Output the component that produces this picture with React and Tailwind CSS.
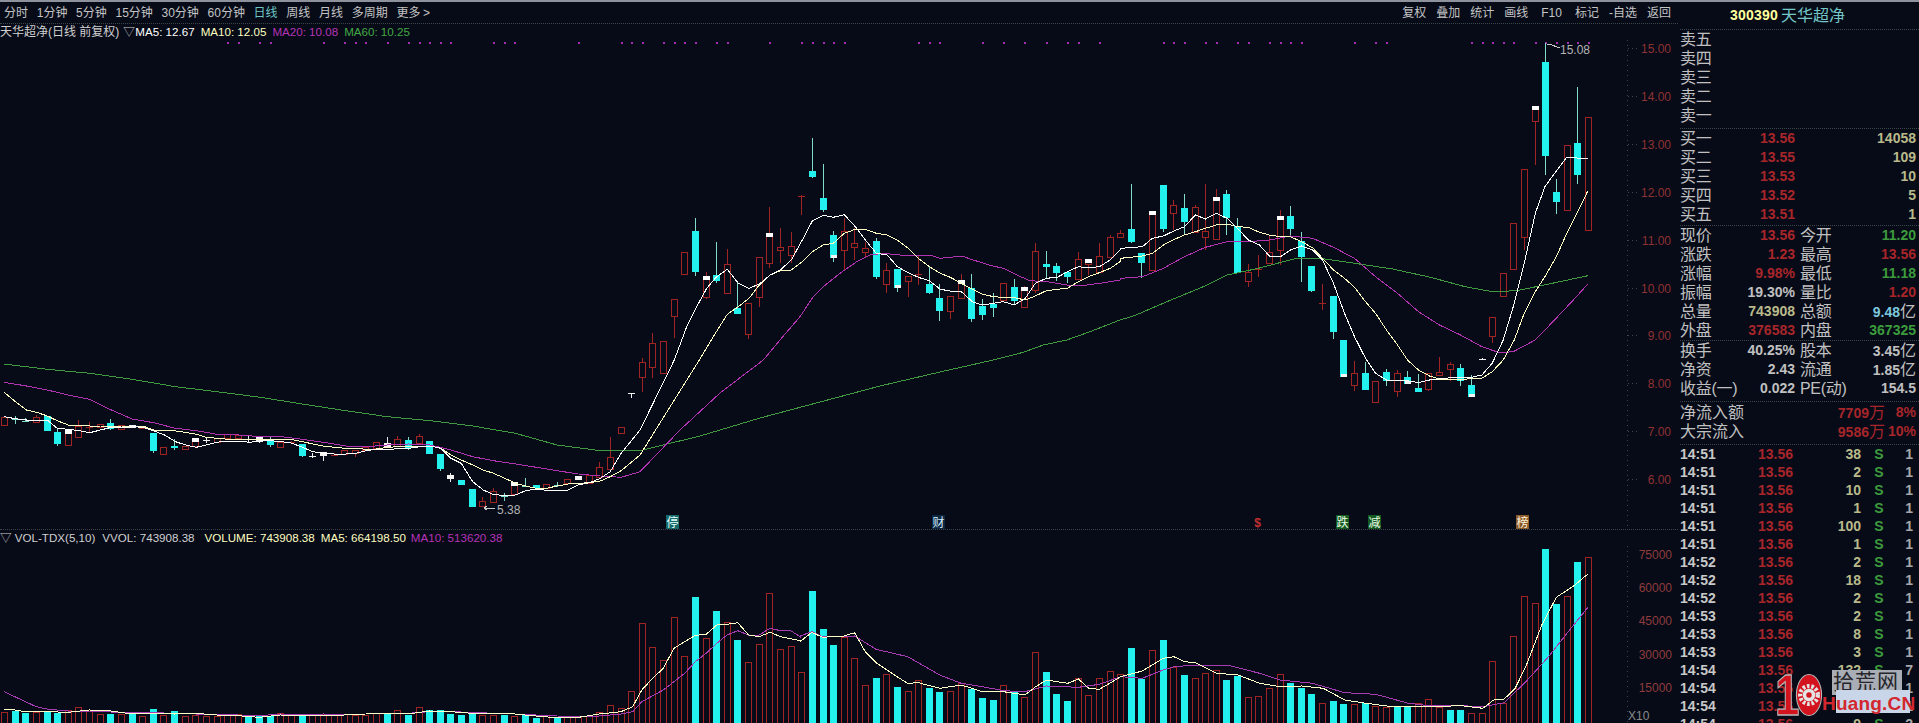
const RED = "#a02424";
const CYAN = "#22f1ee";
const PALE = "#7edcc8";

// [kind, wickTop, bodyTop, bodyBottom, wickBottom], measured on the crops, converted by offset below
// u up, t up + white cap, d down, b down + white foot, x red cross, c cyan cross, k white cross, w white
const lowRows = [
  ["u",230,230,255,255],["c",228,235,238,252],["c",235,239,242,247],["u",225,230,245,245],["d",228,228,272,274],
  ["d",265,276,312,317],["t",272,272,314,314],["u",240,258,290,290],["x",245,258,263,275],["u",253,253,260,260],
  ["d",238,250,266,270],["u",255,255,268,271],["w",254,254,264,264],["u",257,257,265,265],["d",278,278,332,340],
  ["u",322,322,342,342],["d",298,318,325,330],["u",318,318,328,328],["t",296,296,318,318],["k",294,299,301,308],
  ["u",295,295,305,305],["u",283,283,295,295],["u",284,284,294,294],["k",288,295,297,305],["w",288,292,306,310],
  ["d",292,298,314,322],["u",306,306,320,320],["x",302,302,310,312],["d",312,312,348,352],["k",338,345,347,354],
  ["w",337,337,348,362],["x",340,341,344,344],["u",330,330,343,343],["u",330,330,340,352],["u",322,322,330,330],
  ["u",306,306,325,325],["w",292,310,320,325],["u",288,298,318,318],["d",292,300,325,330],["u",282,288,308,308],
  ["d",303,303,342,342],["d",342,342,388,392],["w",398,405,416,425],["d",420,420,434,434],["d",447,447,500,500],
  ["u",472,484,497,497],["u",445,452,485,485],["c",458,465,467,482],["t",430,430,463,463],["c",415,434,437,442],
  ["d",436,436,445,448],["u",432,432,443,443],["c",426,432,434,440],["u",417,417,428,428],["w",408,408,420,420],
  ["u",405,405,428,428],["u",365,382,410,410],["u",292,352,388,388],["u",260,260,278,278],["k",158,158,160,173],
];
const midRows = [
  ["u",714,726,772,816],["u",640,669,740,774],["u",662,662,760,760],["u",538,538,587,653],["u",397,397,463,463],
  ["d",295,333,455,467],["t",457,470,530,538],["d",366,465,483,490],["u",388,433,518,518],["d",490,563,581,581],
  ["u",550,550,643,658],["u",412,412,530,562],["t",262,343,428,445],["u",323,381,391,430],["u",335,379,404,430],
  ["x",224,224,228,285],["d",55,153,171,174],["d",132,235,271,277],["b",333,345,413,425],["u",295,333,391,453],
  ["u",325,370,382,420],["u",365,385,395,410],["d",355,363,470,478],["u",430,451,491,518],["b",447,447,505,515],
  ["u",469,469,482,530],["x",405,460,464,495],["d",438,492,518,522],["d",492,534,572,602],["u",527,527,572,597],
  ["t",462,484,533,533],["d",462,503,597,605],["d",537,557,584,600],["d",520,551,563,590],["u",489,489,540,540],
  ["d",477,501,543,555],["t",498,505,560,560],["u",368,393,510,520],["d",393,433,440,478],["d",430,438,459,482],
  ["d",456,456,472,490],["u",396,418,478,478],["t",421,421,432,465],["u",370,409,455,455],["u",345,352,410,410],["u",330,338,352,352],
];
const highRows = [
  ["d",42,178,215,220],["d",250,250,278,325],["t",125,125,300,300],["d",45,45,177,185],["u",90,105,128,180],
  ["d",72,113,155,195],["u",105,112,185,185],["u",42,183,200,240],["t",58,85,208,208],["d",60,72,143,195],
  ["d",145,168,308,310],["u",282,305,332,352],["x",255,293,297,322],["u",195,245,280,280],["t",120,140,240,285],
  ["d",108,138,177,200],["d",185,212,260,335],["d",288,288,362,367],["x",342,396,400,420],["d",378,378,485,508],
  ["b",510,510,620,620],["u",572,610,645,662],["d",576,610,660,660],["u",632,632,695,695],["d",597,605,632,648],
  ["u",600,608,662,680],["b",603,622,642,642],["d",612,655,665,665],["u",608,608,657,662],["u",560,607,614,615],
  ["u",575,582,596,632],["d",582,594,632,648],["b",615,645,680,680],["k",564,564,566,566],["u",440,440,497,520],
  ["u",310,310,377,377],["u",158,158,298,298],["u",-3,-3,201,240],["t",-189,-189,-147,-15],["d",-381,-324,-42,15],
  ["d",27,66,96,132],["u",-75,-75,120,120],["d",-249,-81,15,42],["u",-159,-159,180,180],
];
const shiftRows = (rows, top) =>
  rows.map(([kind, ...ys]) => [kind, ...ys.map((y) => Math.round(top + y / 3))]);
const candles = [...shiftRows(lowRows, 340), ...shiftRows(midRows, 120), ...shiftRows(highRows, 170)];
const barX = (i) => 4 + 10.63 * i;

const scale = (sx, left, top) => (pts) => pts.map(([x, y]) => [left + x / sx, top + y / 3]);
const fromLow = scale(2.45, 0, 340);
const fromMid = scale(3, 600, 120);
const fromHigh = scale(2.904, 1100, 170);

const ma5 = [
  ...fromLow([[10,230],[38,236],[65,240],[116,240],[140,265],[167,268],[194,272],[220,278],[246,270],[273,262],[298,264],[324,260],[350,262],[376,272],[403,285],[430,305],[455,315],[481,322],[505,315],[532,307],[558,303],[585,303],[611,307],[638,303],[663,302],[689,305],[712,308],[741,322],[767,335],[792,340],[819,342],[847,342],[871,340],[897,332],[922,328],[949,330],[976,325],[1001,325],[1028,320],[1054,318],[1080,325],[1105,355],[1130,370],[1158,425],[1184,450],[1209,464],[1237,466],[1263,465],[1288,452],[1314,447],[1339,451],[1365,451],[1392,450],[1417,435],[1444,428],[1471,415],[1495,395],[1522,340],[1568,270]]),
  ...fromMid([[223,720],[260,620],[290,560],[320,505],[350,470],[382,448],[415,490],[447,505],[478,492],[511,465],[541,450],[574,420],[607,360],[637,303],[670,286],[700,292],[733,284],[766,320],[796,360],[829,400],[862,405],[892,440],[925,458],[955,472],[988,482],[1021,508],[1051,513],[1084,515],[1117,545],[1147,555],[1180,550],[1210,545],[1243,555],[1276,535],[1306,490],[1339,475],[1372,472],[1402,455],[1435,440],[1465,443],[1498,440],[1531,420],[1560,390]]),
  ...fromHigh([[60,235],[123,230],[152,205],[184,198],[216,182],[245,170],[277,135],[306,147],[338,130],[370,145],[399,175],[431,210],[463,225],[492,258],[524,260],[553,240],[585,228],[617,240],[646,270],[678,340],[710,430],[739,500],[771,565],[800,610],[832,630],[864,630],[893,632],[925,638],[957,630],[986,627],[1018,623],[1047,623],[1079,622],[1109,615],[1139,580],[1171,510],[1203,400],[1232,280],[1264,130],[1292,50],[1320,10]]),
  [1555,173],[1567,157],[1577,158],[1588,159],
];
const ma10 = [
  ...fromLow([[10,157],[38,185],[65,210],[90,217],[116,228],[140,242],[167,255],[194,257],[220,258],[246,258],[273,260],[298,258],[324,258],[350,258],[376,270],[403,272],[430,273],[455,277],[481,283],[505,292],[532,295],[558,298],[585,299],[611,300],[638,298],[663,298],[689,298],[712,298],[741,305],[767,312],[792,318],[819,322],[847,325],[871,325],[897,328],[922,327],[949,322],[976,320],[1001,320],[1028,318],[1054,318],[1080,325],[1105,345],[1130,360],[1158,375],[1184,390],[1209,400],[1237,415],[1263,430],[1288,438],[1314,445],[1339,445],[1365,438],[1392,432],[1417,430],[1444,428],[1471,423],[1495,410],[1522,392],[1568,345]]),
  ...fromMid([[298,720],[340,650],[382,583],[415,560],[447,535],[478,495],[511,465],[541,452],[574,450],[607,425],[637,395],[670,375],[700,370],[733,340],[766,328],[796,328],[829,340],[862,345],[892,360],[925,385],[955,415],[988,440],[1021,460],[1051,472],[1084,490],[1117,508],[1147,522],[1180,530],[1210,532],[1243,533],[1276,540],[1306,528],[1339,512],[1372,508],[1402,505],[1435,485],[1465,470],[1498,458],[1531,445],[1560,425]]),
  ...fromHigh([[60,265],[123,258],[152,250],[184,225],[216,208],[245,195],[277,185],[306,175],[338,165],[370,162],[399,170],[431,172],[463,187],[492,195],[524,200],[553,200],[585,215],[617,233],[646,265],[678,300],[710,325],[739,352],[771,395],[800,430],[832,480],[864,525],[893,570],[925,600],[957,618],[986,627],[1018,627],[1047,630],[1079,625],[1109,625],[1139,605],[1171,570],[1203,510],[1232,430],[1264,365],[1292,320],[1325,260],[1360,180],[1390,120],[1417,62]]),
];
const ma20 = [
  ...fromLow([[10,127],[65,138],[116,150],[167,165],[220,178],[273,210],[324,237],[376,248],[430,265],[481,272],[532,283],[585,285],[638,290],[689,290],[741,298],[792,307],[847,318],[897,320],[949,315],[1001,312],[1054,315],[1105,330],[1158,350],[1209,362],[1263,372],[1314,382],[1365,392],[1417,402],[1471,408],[1522,412],[1568,395]]),
  [680,430],[720,393],
  ...fromMid([[490,720],[540,660],[600,590],[640,530],[670,500],[720,460],[770,425],[810,405],[850,400],[900,405],[950,405],[990,405],[1020,415],[1050,412],[1085,408],[1120,420],[1170,436],[1210,445],[1250,465],[1290,482],[1340,485],[1400,495],[1460,495],[1500,490],[1560,480]]),
  ...fromHigh([[60,325],[123,320],[184,295],[245,260],[306,232],[370,215],[431,215],[492,210],[553,198],[617,205],[678,232],[739,265],[800,320],[864,370],[925,425],[986,465],[1047,495],[1109,530],[1160,548],[1200,545],[1264,510],[1320,450],[1370,395],[1417,342]]),
];
const ma60 = [
  ...fromLow([[10,72],[116,88],[220,100],[324,118],[430,140],[532,155],[638,172],[741,192],[847,212],[949,230],[1054,242],[1158,258],[1263,280],[1365,315],[1471,332],[1568,332]]),
  [700,436],[760,418],[820,402],[880,386],[940,372],
  ...fromMid([[1180,720],[1270,697],[1330,675],[1400,660],[1470,635],[1560,600]]),
  ...fromHigh([[100,437],[190,397],[300,350],[370,315],[460,295],[570,265],[640,265],[740,280],[850,297],[960,322],[1060,350],[1140,365],[1210,362],[1290,345],[1417,317]]),
];

const dots = [21,22,24,25,30,32,33,34,36,38,39,40,41,42,46,47,48,54,58,59,60,62,63,64,65,67,68,72,75,76,77,78,79,86,87,88,92,94,96,98,100,101,103,109,110,111,113,114,116,117,119,120,121,122,127,129,130,138,139,140,141,142,144,145,146,147,148,149];

// volume tops, d marks cyan bars
const volumes = [
  ["u",607],["d",602],["d",608],["u",607],["d",602],["d",608],["u",600],["u",590],["u",604],["u",612],
  ["d",612],["u",612],["d",612],["u",618],["d",597],["u",615],["d",603],["u",619],["u",615],["u",618],
  ["u",618],["u",614],["u",613],["d",614],["d",615],["d",618],["u",609],["u",612],["d",613],["u",615],
  ["u",612],["u",614],["u",612],["u",614],["u",615],["u",608],["d",610],["u",601],["d",614],["u",592],
  ["d",600],["d",600],["d",612],["d",614],["d",609],["u",615],["u",615],["d",616],["u",618],["d",615],
  ["d",623],["u",616],["d",620],["u",621],["u",622],["u",618],["u",607],["u",585],["u",595],["u",543],
  ["u",340],["u",410],["u",450],["u",322],["u",438],["d",260],["u",385],["d",302],["u",335],["d",390],
  ["u",455],["u",403],["u",250],["u",418],["u",408],["u",487],["d",243],["d",357],["d",405],["u",380],
  ["u",445],["u",525],["d",503],["u",492],["d",530],["u",543],["u",510],["d",533],["d",546],["u",543],
  ["u",520],["d",538],["d",563],["d",570],["u",525],["d",545],["u",562],["u",427],["d",487],["d",552],
  ["d",573],["u",505],["u",555],["u",505],["u",483],["u",492],["d",414],["d",507],["u",420],["d",390],
  ["u",470],["d",495],["u",503],["u",488],["u",480],["d",510],["d",497],["u",562],["u",558],["u",533],
  ["u",492],["d",520],["d",533],["d",552],["u",580],["d",572],["d",581],["u",582],["d",580],["u",588],
  ["u",590],["d",592],["d",592],["u",578],["u",568],["u",592],["d",600],["d",600],["u",610],["u",610],
  ["u",453],["u",578],["u",378],["u",258],["u",280],["d",117],["d",282],["u",258],["d",155],["u",140],
];
const fromVolLeft = scale(1.96, 0, 510);
const fromVolRight = scale(1.867, 800, 510);
const volMa5 = [
  ...fromVolLeft([[8,597],[29,600],[50,605],[92,605],[133,607],[175,600],[217,603],[258,612],[300,610],[342,612],[383,610],[425,615],[466,617],[508,622],[550,615],[592,617],[633,615],[675,615],[717,612],[758,610],[800,612],[842,603],[883,605],[925,610],[967,610],[1009,612],[1050,618],[1092,623],[1134,622],[1175,612],[1217,605],[1240,590],[1258,540],[1279,505],[1300,475],[1321,415],[1342,395],[1363,376],[1384,373],[1405,345],[1425,343],[1446,338],[1467,375],[1488,380],[1509,367],[1530,380],[1568,392]]),
  ...fromVolRight([[0,395],[22,367],[42,382],[82,378],[102,368],[122,425],[142,458],[181,500],[201,520],[221,518],[261,535],[301,525],[341,545],[380,545],[420,555],[440,530],[460,510],[480,515],[500,520],[520,507],[539,535],[559,538],[599,500],[639,483],[678,445],[698,440],[718,455],[738,458],[778,490],[818,495],[858,520],[897,530],[937,528],[977,535],[1017,570],[1057,580],[1096,588],[1136,590],[1175,590],[1235,587],[1275,595],[1295,570],[1315,567],[1335,535],[1355,470],[1385,345],[1412,262],[1445,227],[1471,192]]),
];
const volMa10 = [
  ...fromVolLeft([[8,545],[29,560],[50,575],[71,590],[92,597],[133,603],[175,603],[217,606],[258,608],[300,608],[342,610],[383,612],[425,613],[466,615],[508,617],[550,612],[592,615],[633,612],[675,613],[717,612],[758,610],[800,610],[842,605],[883,605],[925,607],[967,610],[1009,612],[1050,615],[1092,618],[1134,620],[1175,618],[1217,612],[1240,605],[1258,575],[1300,540],[1342,490],[1363,455],[1384,430],[1405,400],[1425,375],[1446,362],[1467,375],[1488,375],[1509,355],[1530,362],[1550,362],[1568,380]]),
  ...fromVolRight([[0,378],[22,365],[42,380],[82,380],[102,378],[142,418],[201,440],[261,495],[301,520],[341,530],[380,542],[420,545],[460,528],[520,532],[559,523],[599,500],[639,505],[678,480],[698,470],[738,465],[798,465],[858,490],[897,510],[957,520],[1017,548],[1075,553],[1136,580],[1175,587],[1235,587],[1275,590],[1315,578],[1355,515],[1395,445],[1432,370],[1471,292]]),
];

const priceTicks = [["15.00",48],["14.00",96],["13.00",144],["12.00",192],["11.00",240],["10.00",288],["9.00",335],["8.00",383],["7.00",431],["6.00",479]];
const volumeTicks = [["75000",554],["60000",587],["45000",620],["30000",654],["15000",687]];
const tags = [
  ["停",672,"#176a6a","#e6ffff"],["财",938,"#0b2740","#d5ecff"],["$",1257,"transparent","#c03030"],
  ["跌",1342,"#14591f","#e8ffe8"],["减",1374,"#14591f","#e8ffe8"],["榜",1522,"#8a5a2a","#fff2d8"],
];

const leftTabs = ["分时","1分钟","5分钟","15分钟","30分钟","60分钟","日线","周线","月线","多周期","更多"];
const rightTabs = ["复权","叠加","统计","画线","F10","标记","-自选","返回"];

const asks = ["卖五","卖四","卖三","卖二","卖一"];
const bids = [["买一","13.56","14058"],["买二","13.55","109"],["买三","13.53","10"],["买四","13.52","5"],["买五","13.51","1"]];
const R = "text-[#a8262a]", G = "text-[#3c9c3c]", W = "text-[#c0c0c0]", Y = "text-[#b9b98a]", B = "text-[#7cc6dc]";
const quote = [
  ["现价","13.56",R,"今开","11.20",G],["涨跌","1.23",R,"最高","13.56",R],["涨幅","9.98%",R,"最低","11.18",G],
  ["振幅","19.30%",W,"量比","1.20",R],["总量","743908",Y,"总额","9.48",B,"亿"],["外盘","376583",R,"内盘","367325",G],
];
const fundamentals = [
  ["换手","40.25%",W,"股本","3.45",W,"亿"],["净资","2.43",W,"流通","1.85",W,"亿"],["收益(一)","0.022",W,"PE(动)","154.5",W],
];
const ticks = [
  ["14:51","38",1],["14:51","2",1],["14:51","10",1],["14:51","1",1],["14:51","100",1],["14:51","1",1],["14:52","2",1],["14:52","18",1],
  ["14:52","2",1],["14:53","2",1],["14:53","8",1],["14:53","3",1],["14:54","132",7],["14:54","",1],["14:54","",1],["14:54","9",2],
];

function Line({ points, color }) {
  return (
    <polyline
      points={points.map(([x, y]) => `${x.toFixed(1)},${y.toFixed(1)}`).join(" ")}
      fill="none"
      stroke={color}
      strokeWidth="1"
    />
  );
}

function Candle({ data, x }) {
  const [kind, wickTop, top, bottom, wickBottom] = data;
  const h = Math.max(bottom - top, 1);
  const up = kind === "u" || kind === "t" || kind === "x";
  const wickColor = up ? RED : kind === "k" || kind === "w" ? "#e8e8e8" : PALE;
  const cx = Math.round(x) + 0.5;

  if (kind === "x" || kind === "c" || kind === "k") {
    const color = kind === "x" ? RED : kind === "c" ? PALE : "#f0f0f0";
    const mid = Math.round((top + bottom) / 2) + 0.5;
    return (
      <g stroke={color}>
        <line x1={cx} x2={cx} y1={wickTop} y2={wickBottom} />
        <line x1={cx - 3.5} x2={cx + 3.5} y1={mid} y2={mid} />
      </g>
    );
  }
  return (
    <g>
      <line x1={cx} x2={cx} y1={wickTop} y2={top} stroke={wickColor} />
      <line x1={cx} x2={cx} y1={bottom} y2={wickBottom} stroke={wickColor} />
      {up && <rect x={cx - 3} y={top + 0.5} width="6" height={h} fill="none" stroke={RED} />}
      {kind === "t" && <rect x={cx - 3.5} y={top - 1} width="7" height="4" fill="#fff" />}
      {(kind === "d" || kind === "b") && <rect x={cx - 3.5} y={top} width="7" height={h} fill={CYAN} />}
      {kind === "b" && <rect x={cx - 3} y={bottom - 3} width="6" height="3" fill="#f4f4f4" />}
      {kind === "w" && <rect x={cx - 3.5} y={top} width="7" height={h} fill="#f4f4f4" />}
    </g>
  );
}

function PriceChart() {
  return (
    <svg viewBox="0 40 1678 489" className="w-[1678px] h-[489px] block" fontSize="12" shapeRendering="crispEdges">
      <line x1="1627.5" x2="1627.5" y1="40" y2="529" stroke="#3a4648" strokeDasharray="1 4" />
      {dots.map((i) => (
        <rect key={i} x={Math.round(barX(i))} y="42" width="2" height="2" fill="#a32db0" />
      ))}
      {candles.map((c, i) => (
        <Candle key={i} data={c} x={barX(i)} />
      ))}
      <Line points={ma60} color="#3f9a3f" />
      <Line points={ma20} color="#b033b0" />
      <Line points={ma10} color="#ffffc4" />
      <Line points={ma5} color="#ffffff" />
      {priceTicks.map(([label, y]) => (
        <g key={label}>
          <line x1="1628" x2="1638" y1={y + 0.5} y2={y + 0.5} stroke="#3a4648" strokeDasharray="1 3" />
          <text x="1671" y={y + 4.5} textAnchor="end" fill="#8f3232">{label}</text>
        </g>
      ))}
      <path d="M1546.5 44h3l10 4" fill="none" stroke="#c8c8c8" />
      <text x="1560" y="54" fill="#b4b4b4">15.08</text>
      <path d="M484 508h11M484 508l3 -2M484 508l3 2" fill="none" stroke="#c8c8c8" />
      <text x="497" y="514" fill="#b4b4b4">5.38</text>
      {tags.map(([label, x, bg, color]) => (
        <g key={label}>
          <rect x={x - 6} y="515" width="13" height="14" fill={bg} />
          <text x={x + 0.5} y="527" textAnchor="middle" fill={color} fontWeight={label === "$" ? "bold" : "normal"}>{label}</text>
        </g>
      ))}
    </svg>
  );
}

function VolumeChart() {
  return (
    <svg viewBox="0 546 1678 177" className="w-[1678px] h-[177px] block" fontSize="12" shapeRendering="crispEdges">
      <line x1="1627.5" x2="1627.5" y1="546" y2="723" stroke="#3a4648" strokeDasharray="1 4" />
      {volumes.map(([kind, top], i) => {
        const y = Math.round(510 + top / 3);
        const cx = Math.round(barX(i)) + 0.5;
        return kind === "d" ? (
          <rect key={i} x={cx - 3.5} y={y} width="7" height={723 - y} fill={CYAN} />
        ) : (
          <rect key={i} x={cx - 3} y={y + 0.5} width="6" height={724 - y} fill="none" stroke={RED} />
        );
      })}
      <Line points={volMa10} color="#a63cb4" />
      <Line points={volMa5} color="#ffffc8" />
      {volumeTicks.map(([label, y]) => (
        <text key={label} x="1672" y={y + 4.5} textAnchor="end" fill="#8f3c3c">{label}</text>
      ))}
      <text x="1628" y="720" fill="#8a8a8a">X10</text>
    </svg>
  );
}

function QuoteRow({ row }) {
  const [a, av, ac, b, bv, bc, unit] = row;
  return (
    <div className="flex h-[19px] items-center">
      <span className="w-[62px] shrink-0 text-[16px] tracking-[-0.3px] whitespace-nowrap">{a}</span>
      <span className={`w-[53px] text-right text-[14px] font-bold ${ac}`}>{av}</span>
      <span className="ml-[5px] w-[50px] text-[16px] tracking-[-0.3px] whitespace-nowrap">{b}</span>
      <span className={`w-[66px] text-right text-[14px] font-bold ${bc}`}>
        {bv}
        {unit && <span className="text-[16px] font-normal text-[#c0c0c0]">{unit}</span>}
      </span>
    </div>
  );
}

function Watermark() {
  return (
    <div className="absolute left-[1776px] top-[669px] w-[134px] h-[46px]">
      <div className="absolute left-[56px] top-[1px] w-[70px] h-[25px] bg-[#a9adb5]" />
      <div className="absolute left-[57px] top-0 text-[21px] leading-[26px] text-[#25252b] tracking-[1px]">拾荒网</div>
      <div className="absolute left-[60px] top-[21px] w-[74px] h-[23px] bg-[#c9d6ea]" />
      <div className="absolute left-[46px] top-[24px] text-[19px] leading-[22px] font-bold text-[#d3272f] tracking-[0.2px]">Huang.CN</div>
      <div className="absolute -left-[1px] top-[6px] text-[44px] leading-[40px] font-bold text-[#d3141f] scale-y-[1.3] [-webkit-text-stroke:1px_#b8b8b8]">1</div>
      <svg viewBox="0 0 26 42" className="absolute left-[19px] top-[4px] w-[28px] h-[44px]">
        <ellipse cx="13" cy="21" rx="12" ry="19.5" fill="#d3141f" stroke="#b8b8b8" />
        <circle cx="13" cy="21" r="8.5" fill="none" stroke="#e4e4e4" strokeWidth="4" strokeDasharray="2.5 1.7" />
        <circle cx="13" cy="21" r="6" fill="#e4e4e4" />
        <circle cx="13" cy="21" r="2.6" fill="#d3141f" />
      </svg>
    </div>
  );
}

function SidePanel() {
  return (
    <div className="w-[241px] shrink-0 pl-[2px] text-[#c0c0c0] overflow-hidden">
      <div className="h-[28px] flex items-center pl-[50px] gap-[3px] border-b border-dotted border-[#3a4648]">
        <span className="text-[14px] font-bold text-[#ffff9c] tracking-[0.2px]">300390</span>
        <span className="text-[16px] text-[#74c6c8]">天华超净</span>
      </div>
      <div className="h-[99px] border-b border-dotted border-[#3a4648]">
        {asks.map((label) => (
          <div key={label} className="h-[19px] flex items-center text-[16px] tracking-[-0.3px]">{label}</div>
        ))}
      </div>
      <div className="h-[97px] border-b border-dotted border-[#3a4648]">
        {bids.map(([label, price, qty]) => (
          <div key={label} className="h-[19px] flex items-center">
            <span className="w-[62px] text-[16px] tracking-[-0.3px]">{label}</span>
            <span className={`w-[53px] text-right text-[14px] font-bold ${R}`}>{price}</span>
            <span className={`flex-1 pr-[3px] text-right text-[14px] font-bold ${Y}`}>{qty}</span>
          </div>
        ))}
      </div>
      <div className="h-[115px] border-b border-dotted border-[#3a4648]">
        {quote.map((row) => (
          <QuoteRow key={row[0]} row={row} />
        ))}
      </div>
      <div className="h-[61px] border-b border-dotted border-[#3a4648]">
        {fundamentals.map((row) => (
          <QuoteRow key={row[0]} row={row} />
        ))}
      </div>
      <div className="h-[43px] border-b border-dotted border-[#3a4648] pt-[1px]">
        <div className="h-[19px] flex items-center">
          <span className="text-[16px]">净流入额</span>
          <span className={`ml-auto text-[14px] font-bold ${R}`}>7709<span className="text-[16px] font-normal">万</span></span>
          <span className={`w-[34px] pr-[3px] text-right text-[14px] font-bold ${R}`}>8%</span>
        </div>
        <div className="h-[19px] flex items-center">
          <span className="text-[16px]">大宗流入</span>
          <span className={`ml-auto text-[14px] font-bold ${R}`}>9586<span className="text-[16px] font-normal">万</span></span>
          <span className={`w-[34px] pr-[3px] text-right text-[14px] font-bold ${R}`}>10%</span>
        </div>
      </div>
      <div>
        {ticks.map(([time, vol, n], i) => (
          <div key={i} className="h-[18px] flex items-center text-[14px] font-bold">
            <span className="w-[50px] text-[#c8c8c8]">{time}</span>
            <span className={`w-[63px] text-right ${R}`}>13.56</span>
            <span className={`w-[68px] text-right ${Y}`}>{vol}</span>
            <span className={`w-[36px] text-center ${G}`}>S</span>
            <span className="w-[16px] text-right text-[#a8a8a8]">{n}</span>
          </div>
        ))}
      </div>
    </div>
  );
}

export default function App() {
  return (
    <div className="relative w-[1919px] h-[723px] overflow-hidden bg-[#070b18] font-['Liberation_Sans','Noto_Sans_CJK_SC',sans-serif]">
      <div className="h-[2px] bg-[#8e929c]" />
      <div className="flex h-[721px]">
        <div className="w-[1678px] shrink-0">
          <div className="h-[22px] pl-[4px] pr-[7px] flex items-center text-[12px] text-[#c4c4c4] border-b border-dotted border-[#3a4648]">
            <div className="flex gap-[8.7px]">
              {leftTabs.map((tab) => (
                <span key={tab} className={tab === "日线" ? "text-[#6ec6c6]" : ""}>{tab}</span>
              ))}
              <span className="-ml-[6px] text-[#c4c4c4]">&gt;</span>
            </div>
            <div className="ml-auto flex gap-[10px]">
              {rightTabs.map((tab) => (
                <span key={tab} className={tab === "F10" ? "mx-[3px]" : ""}>{tab}</span>
              ))}
            </div>
          </div>
          <div className="h-[16px] flex items-center text-[11.6px] text-[#d0d0d0] whitespace-nowrap">
            <span className="text-[12px]">天华超净(日线 前复权)</span>
            <span className="ml-[4px] w-[12px]">▽</span>
            <span className="text-white">MA5: 12.67</span>
            <span className="ml-[6px] text-[#ffffc0]">MA10: 12.05</span>
            <span className="ml-[6px] text-[#b633b6]">MA20: 10.08</span>
            <span className="ml-[6px] text-[#44a844]">MA60: 10.25</span>
          </div>
          <PriceChart />
          <div className="h-[17px] flex items-center border-t border-dotted border-[#3a4648] text-[11.6px] whitespace-nowrap text-[#d0d0d0]">
            <span>▽ VOL-TDX(5,10)</span>
            <span className="ml-[7px]">VVOL: 743908.38</span>
            <span className="ml-[10px] text-[#ffffc0]">VOLUME: 743908.38</span>
            <span className="ml-[6px] text-[#ffffc0]">MA5: 664198.50</span>
            <span className="ml-[5px] text-[#b633b6]">MA10: 513620.38</span>
          </div>
          <VolumeChart />
        </div>
        <SidePanel />
      </div>
      <Watermark />
    </div>
  );
}
